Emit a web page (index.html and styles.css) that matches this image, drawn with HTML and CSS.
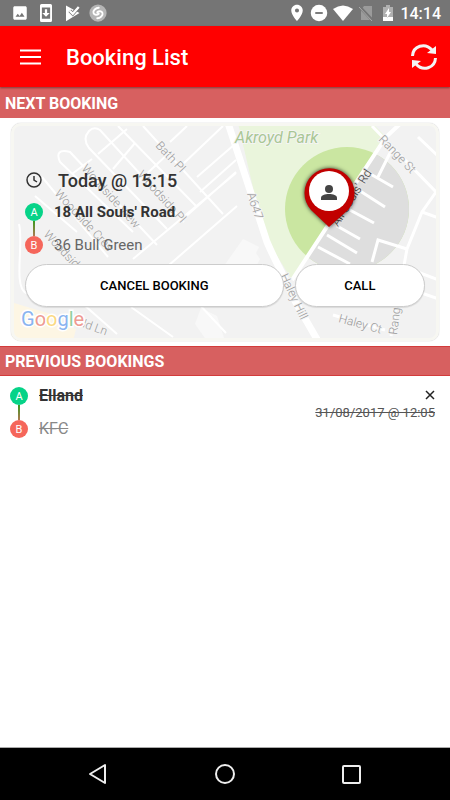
FILE: index.html
```html
<!DOCTYPE html>
<html lang="en">
<head>
    <meta charset="UTF-8">
    <meta name="viewport" content="width=device-width, initial-scale=1.0">
    <title>Booking List</title>
    <link rel="stylesheet" href="styles.css">
</head>
<body>
    <div class="status-bar">
        <div class="status-icons notifications">
            <svg width="18" height="18" viewBox="0 0 24 24" fill="#fff"><path d="M21 19V5c0-1.100-.9-2-2-2H5c-1.100 0-2 .9-2 2v14c0 1.100.9 2 2 2h14c1.100 0 2-.9 2-2zM6 17l3-4 2.500 3 3-4.500L18 17z"/></svg>
            <svg width="18" height="18" viewBox="0 0 24 24" fill="#fff"><path fill-rule="evenodd" d="M6 0h12a2 2 0 0 1 2 2v20a2 2 0 0 1-2 2H6a2 2 0 0 1-2-2V2a2 2 0 0 1 2-2zM6.500 4.500v15h11v-15zM10.500 7h3v5H17l-5 5-5-5h3.500z"/></svg>
            <svg width="18" height="18" viewBox="0 0 24 24"><path d="M4 2l18 10L4 23z" fill="#fff"/><path d="M9 9l4 4 8-9" fill="none" stroke="#757575" stroke-width="5"/><path d="M9 9l4 4 8-9" fill="none" stroke="#fff" stroke-width="3"/></svg>
            <svg width="18" height="18" viewBox="0 0 24 24"><circle cx="12" cy="12" r="11.500" fill="#b5b5b5"/><path d="M13 5c-4 0-8 4-7 7s5 3 7 1M11 19c4 0 8-4 7-7s-5-3-7-1" fill="none" stroke="#fff" stroke-width="2.500" stroke-linecap="round"/></svg>
        </div>
        <div class="status-icons">
            <svg width="16" height="18" viewBox="5 1 14 22" fill="#fff"><path d="M12 2C8.100 2 5 5.100 5 9c0 5.300 7 13 7 13s7-7.700 7-13c0-3.900-3.100-7-7-7zm0 9.500a2.500 2.500 0 1 1 0-5 2.500 2.500 0 0 1 0 5z"/></svg>
            <svg width="18" height="18" viewBox="0 0 24 24"><circle cx="12" cy="12" r="11" fill="#fff"/><path d="M7 12h10" stroke="#757575" stroke-width="2.500"/></svg>
            <svg width="20" height="18" viewBox="0 0 20 18" fill="#fff"><path d="M0 5Q10-2 20 5L10 17z"/></svg>
            <svg width="16" height="18" viewBox="0 0 16 18"><path d="M6 2h8v14H3V6z" fill="#9b9b9b"/><path d="M1 2l14 15" stroke="#757575" stroke-width="3"/><path d="M1 3l13 14" stroke="#aaa" stroke-width="1"/></svg>
            <svg width="16" height="18" viewBox="0 0 16 18"><path d="M4 3h3V1h4v2h3v11H4z" fill="#b0b0b0"/><path d="M4 13h10v4H4zM10 4l-4 6h2v4l4-6h-2z" fill="#fff"/></svg>
            <span class="clock">14:14</span>
        </div>
    </div>

    <header class="app-bar">
        <button class="icon-button" aria-label="Menu">
            <svg width="22" height="16" viewBox="0 0 22 16"><path d="M0 1.500h21M0 8h21M0 14.500h21" stroke="#fff" stroke-width="2"/></svg>
        </button>
        <h1>Booking List</h1>
        <button class="icon-button" aria-label="Refresh">
            <svg width="28" height="28" viewBox="0 0 28 28"><g id="arrow"><path d="M2.500 13C3 3 15-1 22 7" fill="none" stroke="#f4f4f4" stroke-width="3"/><path d="M26 3v8l-9-1z" fill="#f4f4f4"/></g><use href="#arrow" transform="rotate(180 14 14)"/></svg>
        </button>
    </header>

    <main>
        <h2 class="section-title">NEXT BOOKING</h2>
        <section class="map-card">
            <svg class="map" viewBox="0 0 428 218" preserveAspectRatio="xMidYMid slice" aria-hidden="true">
                <clipPath id="east"><path d="M390 0l-15 14-94 143v61h147V0z"/></clipPath>
                <rect width="428" height="218" fill="#f2f2f2"/>
                <path d="M3 180l40 12-2 6 24 8-3 12H0z" fill="#fdf6e4"/>
                <path d="M232 116l16 8-3 6 4 6-20 38-28-14zM190 185l16 8 8 25h-18l-12-17z" fill="#f8f8f8"/>
                <path d="M227 0h134l14 14-94 143-28-45z" fill="#eaf5dc"/>
                <circle cx="336" cy="86" r="62" fill="#cae6a1"/>
                <circle cx="336" cy="86" r="62" fill="#dedede" clip-path="url(#east)"/>
                <!-- streets -->
                <g fill="none" stroke="#fff" stroke-width="2">
                    <path d="M156 106L78 25q-7-9 0-17 5-5 11-1l84 92"/>
                    <path d="M122 109L49 39q-6-14 10-10l87 93"/>
                    <path d="M31 54l66 80M24 73l42 36M107 3l78 80M132 3l80 88"/>
                    <path d="M87 31l29-25M61 51l20-15M102 46l22-26M159 19l17-16M128 58l32-30M172 41l40-38M186 54l38-33M189 69l36-32M172 96l53-47M122 136l103-86M150 149l76-66"/>
                    <path d="M8 101c5 20-6 62 7 69l57 11 34 30M120 184l42 30M187 180l28 30"/>
                </g>
                <g fill="none" stroke="#fff" stroke-width="3">
                    <path d="M356 49l26 15M346 66l28 18M337 86l26 14M326 103l23 13M316 112l30 18M307 124l32 17M367 54l14-28"/>
                    <path d="M361 3l64 66-14 20-15 37-16 87M411 89l17 6M407 14l21 20M361 139l6-22 29 9M396 145l32 12M396 165l32 11M322 192l52 15"/>
                </g>
                <path d="M390 0l-15 14-94 143" fill="none" stroke="#fff" stroke-width="4"/>
                <path d="M217 0l39 119q7 16 15 31l14 30 22 38" fill="none" stroke="#fff" stroke-width="7"/>
                <g class="map-labels">
                    <text x="224" y="20" class="park-label">Akroyd Park</text>
                    <text transform="translate(144 23) rotate(47)">Bath Pl</text>
                    <text transform="translate(70 46) rotate(48)">Woodside View</text>
                    <text transform="translate(126 52) rotate(48)">Woodside Pl</text>
                    <text transform="translate(43 71) rotate(47)">Woodside Cres</text>
                    <text transform="translate(32 112) rotate(47)">Woodside</text>
                    <text transform="translate(71 204) rotate(20)">ld Ln</text>
                    <text transform="translate(236 71) rotate(72)">A647</text>
                    <text transform="translate(269 153) rotate(65)">Haley Hill</text>
                    <text transform="translate(367 17) rotate(46)">Range St</text>
                    <text transform="translate(327 199) rotate(15)">Haley Ct</text>
                    <text transform="translate(386 212) rotate(-83)">Range St</text>
                    <text transform="translate(327 104) rotate(-58)" class="road-label">All Souls' Rd</text>
                </g>
                <text x="10" y="203" class="map-logo"><tspan fill="#8ab4f0">G</tspan><tspan fill="#ee9b93">o</tspan><tspan fill="#fbd982">o</tspan><tspan fill="#8ab4f0">g</tspan><tspan fill="#93cfa0">l</tspan><tspan fill="#ee9b93">e</tspan></text>
                <rect x="1.500" y="1.500" width="425" height="215" rx="8" fill="none" stroke="#f7f7f2" stroke-width="3"/>
                <!-- pickup pin -->
                <g class="pin">
                    <path d="M318 104l-18-17a25 25 0 1 1 37 0z" fill="#c10000"/>
                    <circle cx="318" cy="68" r="20" fill="#fff"/>
                    <circle cx="318" cy="66" r="4" fill="#444"/>
                    <path d="M310 77v-2c0-3 4-4 8-4s8 1 8 4v2z" fill="#444"/>
                </g>
            </svg>
            <div class="map-content">
                <div class="booking-time">
                    <svg width="18" height="18" viewBox="0 0 18 18" fill="none" stroke="#333" stroke-width="1.500"><circle cx="9" cy="9" r="7"/><path d="M9 5v4l3 2"/></svg>
                    <span>Today @ 15:15</span>
                </div>
                <ul class="route">
                    <li class="stop from"><span class="marker">A</span>18 All Souls' Road</li>
                    <li class="stop to"><span class="marker">B</span>36 Bull Green</li>
                </ul>
                <div class="button-group">
                    <button class="pill-button wide">CANCEL BOOKING</button>
                    <button class="pill-button">CALL</button>
                </div>
            </div>
        </section>

        <h2 class="section-title bordered">PREVIOUS BOOKINGS</h2>
        <section class="previous-booking">
            <ul class="route">
                <li class="stop from"><span class="marker">A</span><s>Elland</s></li>
                <li class="stop to"><span class="marker">B</span><s>KFC</s></li>
            </ul>
            <div class="booking-meta">
                <button class="icon-button" aria-label="Remove booking">
                    <svg width="10" height="10" viewBox="0 0 10 10"><path d="M1 1l8 8M9 1L1 9" stroke="#222" stroke-width="1.500"/></svg>
                </button>
                <s>31/08/2017 @ 12:05</s>
            </div>
        </section>
    </main>

    <nav class="nav-bar">
        <button class="icon-button" aria-label="Back"><svg width="22" height="22" viewBox="0 0 22 22"><path d="M3 11l15-9v18z"/></svg></button>
        <button class="icon-button" aria-label="Home"><svg width="22" height="22" viewBox="0 0 22 22"><circle cx="11" cy="11" r="9"/></svg></button>
        <button class="icon-button" aria-label="Recent apps"><svg width="22" height="22" viewBox="0 0 22 22"><rect x="2" y="3" width="17" height="17" rx="1"/></svg></button>
    </nav>
</body>
</html>
```

FILE: styles.css
```css
* {
    box-sizing: border-box;
}

body {
    font-family: Roboto, sans-serif;
    margin: 0;
    min-height: 100vh;
    display: flex;
    flex-direction: column;
    background: white;
    color: #333;
}

h1, h2, ul {
    margin: 0;
    padding: 0;
}

svg {
    display: block;
}

button {
    font-family: inherit;
    cursor: pointer;
}

.icon-button {
    display: flex;
    padding: 0;
    border: none;
    background: none;
}

.status-bar {
    display: flex;
    justify-content: space-between;
    align-items: center;
    height: 26px;
    padding: 0 9px 0 11px;
    background: #757575;
}

.status-icons {
    display: flex;
    align-items: center;
    gap: 5px;
}

.notifications {
    gap: 8px;
}

.clock {
    color: white;
    font-size: 16px;
    font-weight: 500;
}

.app-bar {
    display: flex;
    align-items: center;
    height: 61px;
    padding: 0 12px 0 20px;
    background: #ff0000;
    box-shadow: 0 1px 2px rgba(0, 0, 0, 0.4);
    position: relative;
}

.app-bar h1 {
    flex: 1;
    margin-left: 24px;
    padding-top: 2px;
    color: white;
    font-size: 22px;
    font-weight: 500;
}

main {
    flex: 1;
}

.section-title {
    height: 31px;
    padding: 0 5px;
    background: #d76060;
    color: white;
    font-size: 16px;
    font-weight: 700;
    line-height: 34px;
}

.section-title.bordered {
    height: 30px;
    border: solid #d33b3b;
    border-width: 1px 0;
    line-height: 30px;
}

.map-card {
    position: relative;
    margin: 5px 11px;
    border-radius: 10px;
    box-shadow: 0 0 1px rgba(0, 0, 0, 0.4);
    overflow: hidden;
}

.map {
    position: absolute;
    width: 100%;
    height: 100%;
}

.map-labels text {
    font-size: 12px;
    font-weight: 300;
    fill: #999;
    stroke: #f4f4f4;
    stroke-width: 2px;
    paint-order: stroke;
}

.map-labels .park-label {
    font-size: 16px;
    font-style: italic;
    font-weight: 400;
    fill: #a9c795;
}

.map-labels .road-label {
    fill: #333;
    stroke: #e6e6e6;
}

.map-logo {
    font-size: 20px;
    font-weight: 400;
    stroke: white;
    stroke-width: 3px;
    paint-order: stroke;
}

.pin {
    filter: drop-shadow(0 0 2px rgba(0, 0, 0, 0.8));
}

.map-content {
    position: relative;
    padding: 45px 14px 34px;
}

.booking-time {
    display: flex;
    align-items: center;
    gap: 15px;
    height: 24px;
    margin-bottom: 3px;
    font-size: 18px;
    font-weight: 500;
}

.route {
    list-style: none;
    font-size: 16px;
}

.map-content .route {
    font-size: 15px;
}

.stop {
    display: flex;
    align-items: center;
    gap: 11px;
    height: 33px;
}

.from {
    font-weight: 700;
    color: #333;
}

.to {
    color: #666;
}

.marker {
    position: relative;
    width: 18px;
    height: 18px;
    border-radius: 50%;
    background: #06d388;
    color: white;
    font-size: 11px;
    font-weight: 400;
    line-height: 19px;
    text-align: center;
}

.to .marker {
    background: #f5665b;
}

/* line joining the two stops */
.from .marker::after {
    content: "";
    position: absolute;
    top: 18px;
    left: 8px;
    width: 2px;
    height: 15px;
    background: linear-gradient(#3a9a20, #b07850);
}

.button-group {
    display: flex;
    gap: 11px;
    margin-top: 3px;
}

.pill-button {
    flex: 1 1 0;
    height: 43px;
    padding: 0;
    border: 1px solid #ccc;
    border-radius: 22px;
    background: white;
    box-shadow: 0 1px 1px rgba(0, 0, 0, 0.1);
    color: #000;
    font-size: 13px;
    font-weight: 500;
}

.pill-button.wide {
    flex-grow: 2;
}

.previous-booking {
    display: flex;
    justify-content: space-between;
    padding: 3px 15px 0 10px;
}

.previous-booking .to {
    color: #888;
}

.booking-meta {
    display: flex;
    flex-direction: column;
    align-items: flex-end;
    gap: 5px;
    padding-top: 11px;
    color: #555;
    font-size: 13px;
}

.nav-bar {
    display: flex;
    justify-content: space-between;
    align-items: center;
    height: 53px;
    padding: 0 87px;
    border-top: 1px solid #aaa;
    background: black;
}

.nav-bar svg {
    fill: none;
    stroke: #eee;
    stroke-width: 2px;
    stroke-linejoin: round;
}
```
